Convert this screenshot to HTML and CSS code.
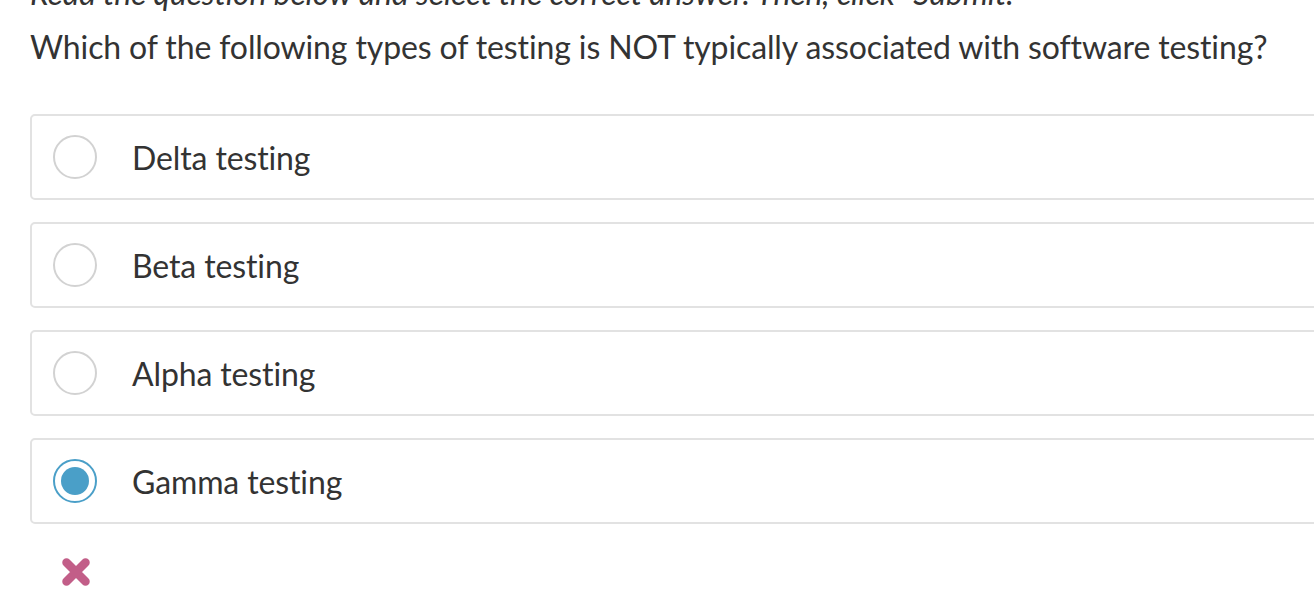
FILE: index.html
```html
<!DOCTYPE html>
<html lang="en">
<head>
<meta charset="utf-8">
<title>Question</title>
<link rel="stylesheet" href="styles.css">
</head>
<body>
<div class="page">
  <p class="instructions">Read the question below and select the correct answer. Then, click "Submit."</p>
  <p class="question">Which of the following types of testing is NOT typically associated with software testing?</p>
  <div class="options">
    <label class="option"><span class="radio"></span><span class="label">Delta testing</span></label>
    <label class="option"><span class="radio"></span><span class="label">Beta testing</span></label>
    <label class="option"><span class="radio"></span><span class="label">Alpha testing</span></label>
    <label class="option"><span class="radio checked"></span><span class="label">Gamma testing</span></label>
  </div>
  <div class="result">
    <svg class="cross" width="28" height="28" viewBox="0 0 28 28" aria-hidden="true">
      <path d="M4.5 4.5 L23.5 23.5 M23.5 4.5 L4.5 23.5" stroke="#c25e88" stroke-width="8.5" stroke-linecap="round"/>
    </svg>
  </div>
</div>
</body>
</html>
```
FILE: styles.css
```css
html, body {
  margin: 0;
  padding: 0;
  background: #ffffff;
  overflow: hidden;
}
.page {
  padding-left: 30px;
  font-family: Lato, "Open Sans", sans-serif;
  color: #333333;
  letter-spacing: -0.12px;
}
.instructions {
  margin: -31px 0 0 0;
  font-size: 32px;
  line-height: 48px;
  font-style: italic;
}
.question {
  margin: 6px 0 0 0;
  font-size: 32px;
  line-height: 48px;
}
.options {
  margin-top: 43px;
  display: flex;
  flex-direction: column;
  gap: 22px;
  width: 1400px;
}
.option {
  display: flex;
  align-items: center;
  height: 82px;
  border: 2px solid #e2e2e2;
  border-radius: 5px;
  padding-left: 21px;
  font-size: 32px;
}
.radio {
  box-sizing: border-box;
  width: 44px;
  height: 44px;
  border-radius: 50%;
  border: 2px solid #d2d2d2;
  flex: none;
  display: flex;
  align-items: center;
  justify-content: center;
}
.radio.checked {
  border-color: #4a9fc8;
}
.radio.checked::after {
  content: "";
  width: 28px;
  height: 28px;
  border-radius: 50%;
  background: #4a9fc8;
}
.label {
  margin-left: 35px;
}
.result {
  padding: 34px 0 0 32px;
}
.cross {
  display: block;
}
```
